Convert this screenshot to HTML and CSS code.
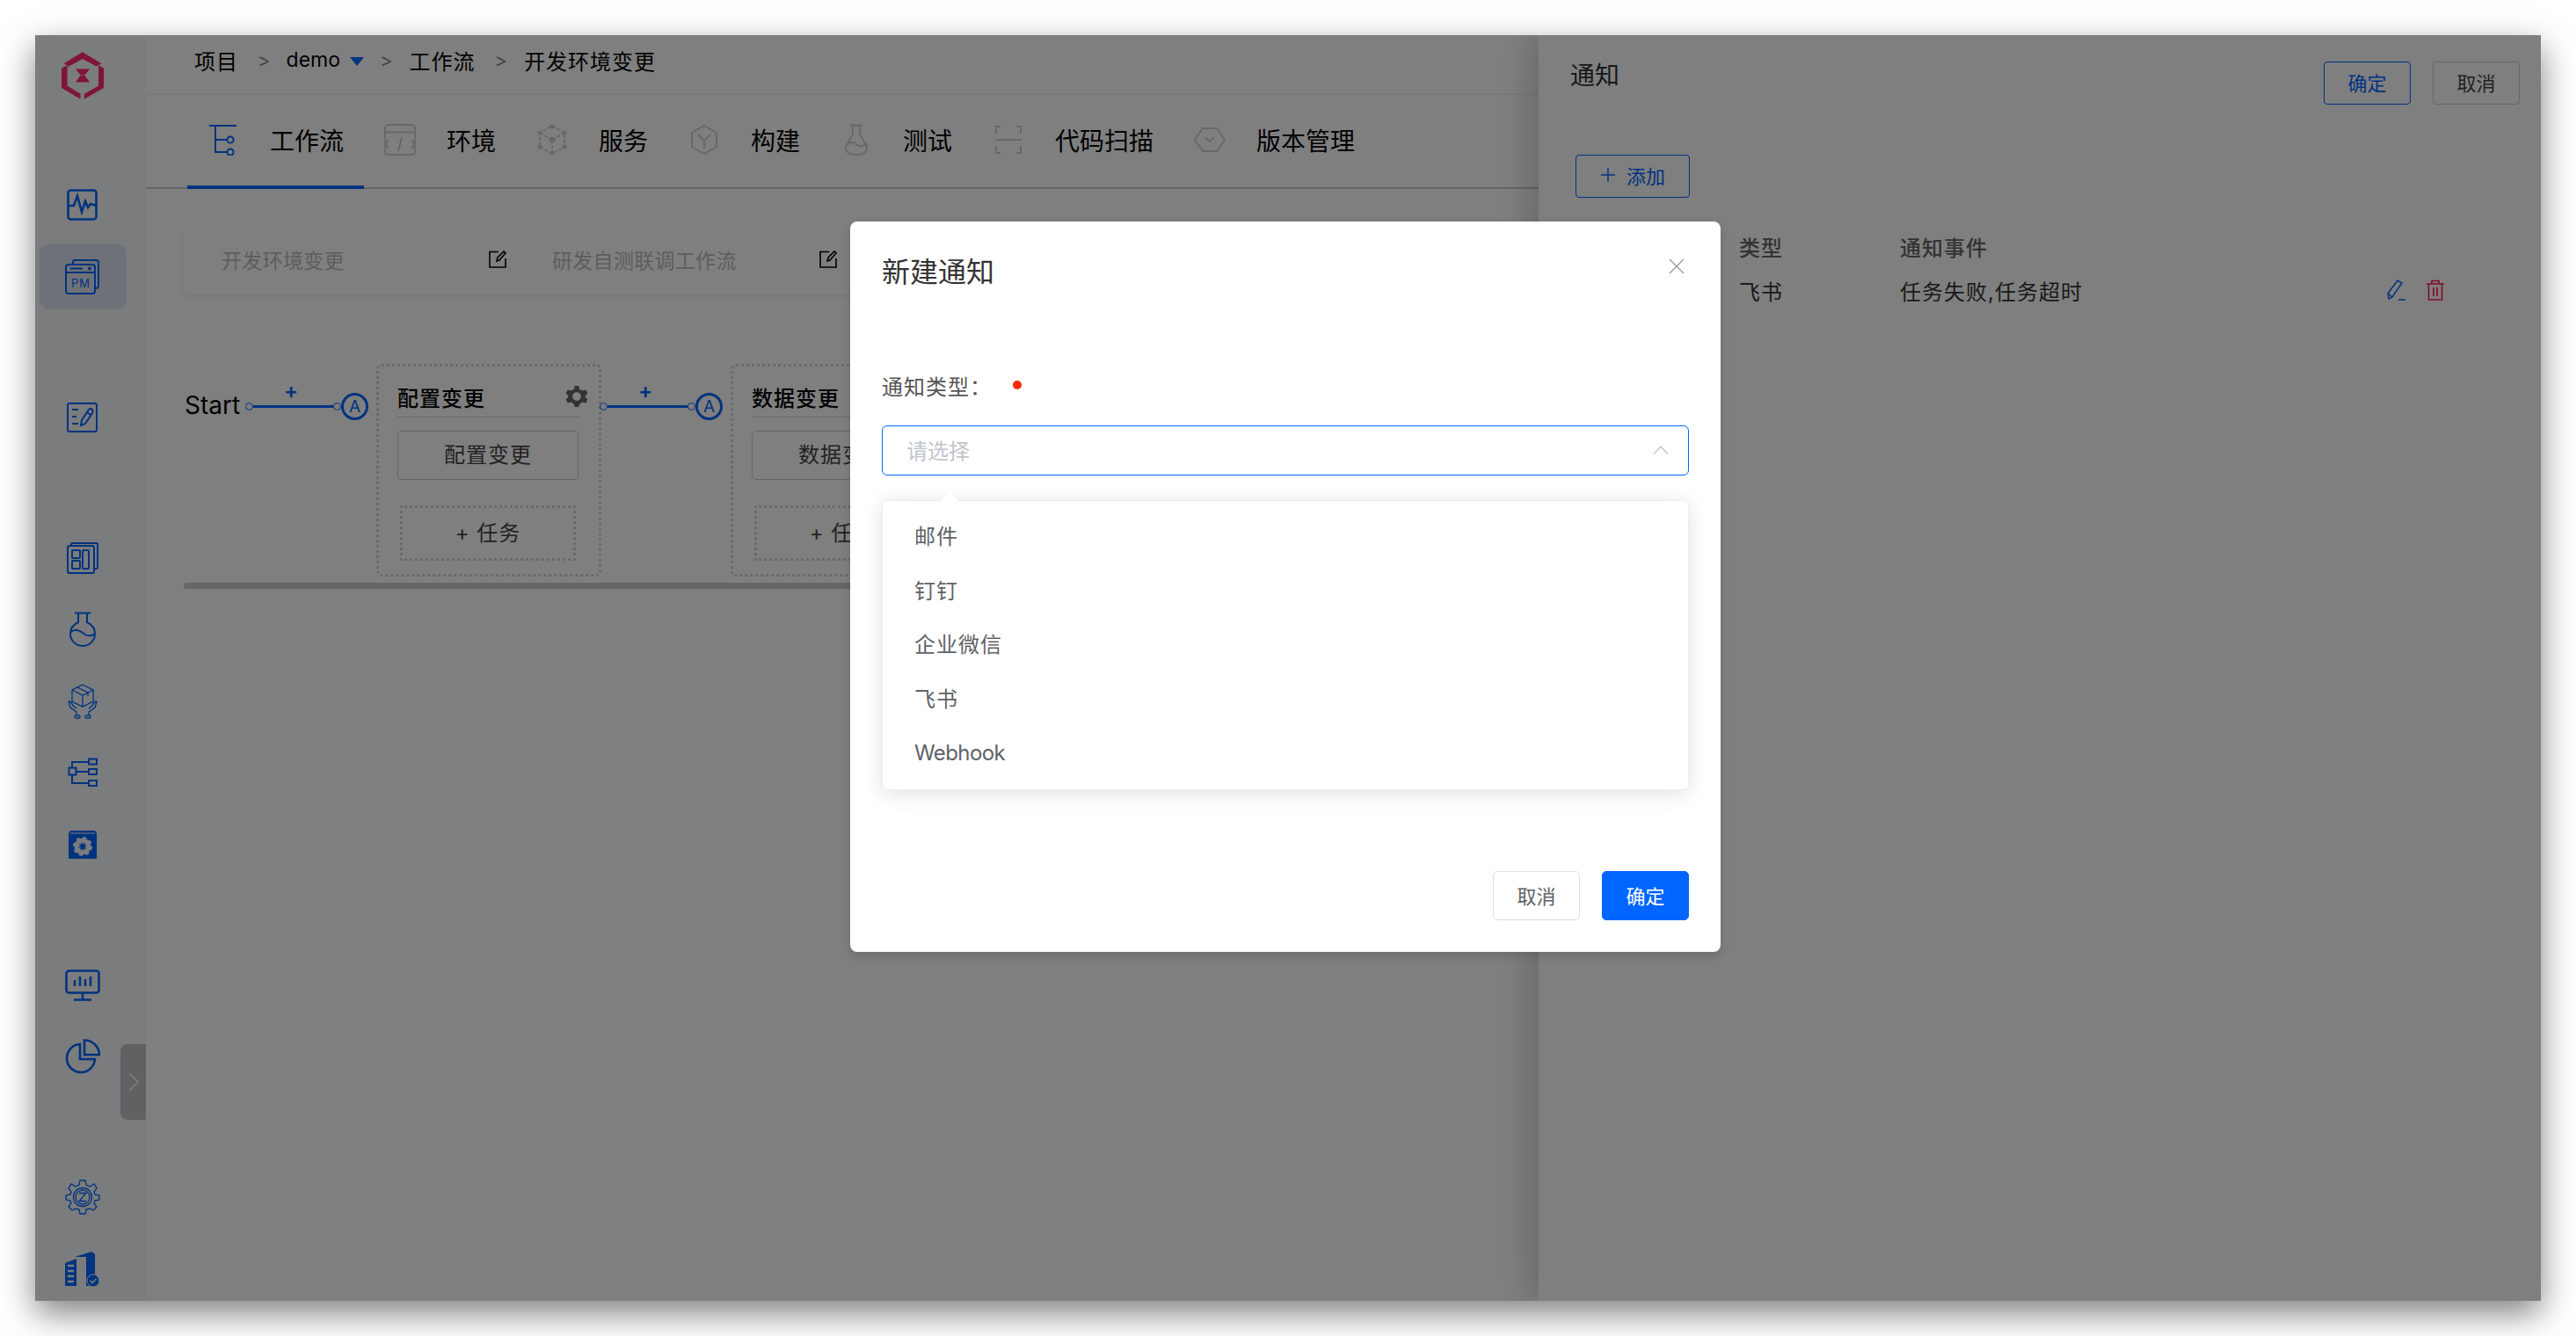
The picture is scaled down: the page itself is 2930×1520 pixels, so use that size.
FILE: index.html
```html
<!DOCTYPE html>
<html lang="zh-CN">
<head>
  <meta charset="UTF-8">
  <title>新建通知</title>
  <link rel="stylesheet" href="styles.css">
</head>
<body>

  <div class="window">

    <aside class="sidebar">
      <svg class="logo" viewBox="60 27 145 161" width="48" height="54">
        <path d="M132 27 L197 66 L180 76 L132 50 L85 76 L68 66 Z M60 82 L80 72 V143 L125 170 V188 L60 150 Z M205 82 L187 72 V143 L138 170 V188 L205 150 Z" fill="#ff2a70"/>
        <path d="M108 85 H157 L140 105 H125 Z M125 107 H140 L157 130 H108 Z" fill="#ff2a70"/>
      </svg>

      <div class="side-group">
        <div class="side-item">
          <svg viewBox="0 0 36 36" width="36" height="36" class="side-icon"><rect x="1.5" y="1.5" width="32" height="33" rx="3"/><path d="M2 19 L8 19 L12 8 L17 26 L21 14 L24 21 L27 17 L34 19"/></svg>
        </div>
        <div class="side-item active">
          <svg viewBox="0 0 40 40" width="40" height="40" class="side-icon thin"><path d="M9 5 V3 Q9 1 11 1 H35 Q38 1 38 4 V30 Q38 33 35 33"/><rect x="1" y="6" width="33" height="33" rx="3"/><path d="M1 15 H34"/><path d="M6 10.5 H20"/><circle cx="28" cy="10.5" r="1"/><text x="7" y="32" class="pm-text">PM</text></svg>
        </div>
      </div>

      <div class="side-group">
        <div class="side-item">
          <svg viewBox="0 0 36 36" width="36" height="36" class="side-icon thin"><rect x="1" y="2" width="33" height="32" rx="2"/><path d="M6 9 H13 M6 17 H11 M6 25 H13"/><path d="M16 27 L17 21 L25 9 Q27 7 29 9 Q30 11 29 13 L21 25 Z M23 12 L27 15"/></svg>
        </div>
      </div>

      <div class="side-group">
        <div class="side-item">
          <svg viewBox="0 0 36 36" width="36" height="36" class="side-icon thin"><path d="M5 4 V2 Q5 1 6 1 H34 Q35 1 35 2 V28 Q35 30 33 30 H31"/><rect x="1" y="4" width="30" height="31" rx="2"/><rect x="6" y="9" width="9" height="9" rx="1"/><rect x="6" y="21" width="9" height="9" rx="1"/><rect x="18" y="9" width="7" height="21" rx="1"/></svg>
        </div>
        <div class="side-item">
          <svg viewBox="0 0 30 40" width="30" height="40" class="side-icon thin"><path d="M6 1.5 H24"/><path d="M10 2 V12 Q1 16 1 25 A14 14 0 0 0 29 25 Q29 16 20 12 V2"/><path d="M1.5 23 Q8 18 15 24 Q22 30 28.5 25"/></svg>
        </div>
        <div class="side-item">
          <svg viewBox="0 0 34 40" width="34" height="40" class="side-icon hair"><path d="M17 1 L29 7 V20 L17 26 L5 20 V7 Z M5 7 L17 13 L29 7 M17 13 V26 M11 4 L23 10 V14"/><path d="M1 20 L3 27 L10 32 V35 M33 20 L31 27 L24 32 V35"/><path d="M1 20 Q4 20 6 25 L10 28 M33 20 Q30 20 28 25 L24 28"/><rect x="8" y="36" width="6" height="3" rx="1.5"/><rect x="20" y="36" width="6" height="3" rx="1.5"/></svg>
        </div>
        <div class="side-item">
          <svg viewBox="0 0 34 34" width="34" height="34" class="side-icon thin"><rect x="1.5" y="11.5" width="8" height="8"/><rect x="24" y="1.5" width="9" height="6"/><rect x="24" y="13" width="9" height="6"/><rect x="24" y="26" width="9" height="6"/><path d="M5 11 V5 H24 M9 16 H24 M5 20 V29 H24"/></svg>
        </div>
        <div class="side-item">
          <svg viewBox="0 0 34 34" width="34" height="34"><path d="M3 1 H31 L33 4 V33 H1 V4 Z" fill="#0066ff"/><path d="M3 4 H31" stroke="#f6f8fa" stroke-width="1"/><circle cx="17" cy="19" r="7" fill="none" stroke="#f6f8fa" stroke-width="8" stroke-dasharray="2.8 2.7"/><circle cx="17" cy="19" r="7" fill="none" stroke="#f6f8fa" stroke-width="5"/></svg>
        </div>
      </div>

      <div class="side-group">
        <div class="side-item">
          <svg viewBox="0 0 40 36" width="40" height="36" class="side-icon"><rect x="1.5" y="1.5" width="37" height="25" rx="3"/><path d="M20 27 V34 M10 34.5 H30"/><path d="M11 19 V12 M17 19 V8 M23 19 V11 M29 19 V8"/></svg>
        </div>
        <div class="side-item">
          <svg viewBox="0 0 40 40" width="40" height="40" class="side-icon"><path d="M17 6 A16 16 0 1 0 34 23 H17 Z"/><path d="M22 1.5 A17 17 0 0 1 39 18 H22 Z"/></svg>
        </div>
      </div>

      <div class="side-group">
        <div class="side-item">
          <svg viewBox="0 0 40 40" width="40" height="40" class="side-icon hair"><path d="M17 1 H23 L24 6 L28 8 L33 5 L36 10 L33 14 L34 17 L39 18 V23 L34 24 L33 27 L36 31 L32 35 L28 33 L24 34 L23 39 H17 L16 34 L12 33 L8 35 L4 31 L7 27 L6 24 L1 23 V18 L6 17 L7 14 L4 10 L7 5 L12 8 L16 6 Z"/><circle cx="20" cy="20" r="10.5"/><circle cx="20" cy="20" r="8"/><path d="M16 15.5 H24 L16 24.5 H24"/></svg>
        </div>
        <div class="side-item">
          <svg viewBox="0 0 40 40" width="40" height="40"><path d="M0 39 V13 L13 8 V39 Z M11 6 L30 0 L34 3 V39 H24 V6 Z" fill="#0066ff"/><path d="M3 16 H10 M3 22 H10 M3 28 H10 M3 34 H10" stroke="#f6f8fa" stroke-width="2.5"/><circle cx="32" cy="33" r="7" fill="#0066ff" stroke="#f6f8fa" stroke-width="1"/><path d="M28.5 33 L31 35.5 L35.5 31" fill="none" stroke="#f6f8fa" stroke-width="1.6"/></svg>
        </div>
      </div>

      <div class="side-toggle">
        <svg viewBox="0 0 12 22" width="12" height="22"><path d="M1 1 L11 11 L1 21" fill="none" stroke="#fff" stroke-width="1.4"/></svg>
      </div>
    </aside>

    <main class="content">
      <div class="breadcrumb">
        <span>项目</span>
        <span class="crumb-sep">&gt;</span>
        <span class="crumb-demo">demo</span>
        <span class="crumb-caret"></span>
        <span class="crumb-sep">&gt;</span>
        <span>工作流</span>
        <span class="crumb-sep">&gt;</span>
        <span>开发环境变更</span>
      </div>

      <nav class="tabs">
        <div class="tab active">
          <svg viewBox="0 0 36 36" width="36" height="36" class="tab-icon blue"><path d="M2 2 H33 M9 2 V32 H22 M9 18 H22"/><circle cx="26" cy="18" r="3.6"/><circle cx="26" cy="32" r="3.6"/></svg>
          <span>工作流</span>
        </div>
        <div class="tab">
          <svg viewBox="0 0 36 36" width="36" height="36" class="tab-icon"><rect x="1" y="1" width="34" height="34" rx="4"/><path d="M1 9.5 H35 M5 18 L2 23 L5 28 M31 18 L34 23 L31 28 M20 15 L16 31"/><path d="M24 5 h1 M28 5 h1 M32 5 h1"/></svg>
          <span>环境</span>
        </div>
        <div class="tab">
          <svg viewBox="0 0 36 36" width="36" height="36" class="tab-icon"><path d="M18 2 L32 10 V26 L18 34 L4 26 V10 Z M18 18 L18 34 M18 18 L4 10 M18 18 L32 10" stroke-dasharray="4 2"/><circle cx="18" cy="18" r="3.5" class="tab-dot"/><circle cx="18" cy="3" r="2.5" class="tab-dot"/><circle cx="32" cy="10" r="2.5" class="tab-dot"/><circle cx="32" cy="26" r="2.5" class="tab-dot"/><circle cx="18" cy="33" r="2.5" class="tab-dot"/><circle cx="4" cy="26" r="2.5" class="tab-dot"/><circle cx="4" cy="10" r="2.5" class="tab-dot"/></svg>
          <span>服务</span>
        </div>
        <div class="tab">
          <svg viewBox="0 0 36 36" width="36" height="36" class="tab-icon"><path d="M18 2 L32 10 V26 L18 34 L4 26 V10 Z M11 12 L18 19 L25 12 M18 19 V28"/></svg>
          <span>构建</span>
        </div>
        <div class="tab">
          <svg viewBox="0 0 36 36" width="36" height="36" class="tab-icon"><path d="M11 1.5 H25 M14 2 V12 L6 25 Q5 35 18 35 Q31 35 30 25 L22 12 V2"/><path d="M6 25 Q12 18 18 23 Q24 28 30 22"/></svg>
          <span>测试</span>
        </div>
        <div class="tab">
          <svg viewBox="0 0 36 36" width="36" height="36" class="tab-icon"><path d="M9 3 H4 V11 M27 3 H32 V11 M9 33 H4 V25 M27 33 H32 V25 M3 18 H33"/></svg>
          <span>代码扫描</span>
        </div>
        <div class="tab">
          <svg viewBox="0 0 36 36" width="36" height="36" class="tab-icon"><path d="M10 5 H26 L35 18 L26 31 H10 L1 18 Z M13 15 L18 20 L23 15"/></svg>
          <span>版本管理</span>
        </div>
      </nav>

      <div class="flow-tabs">
        <div class="flow-tab">
          <span>开发环境变更</span>
          <svg viewBox="0 0 20 20" width="20" height="20" class="edit-icon"><path d="M11 1.5 H1 V19 H19 V9"/><path d="M9 12 L10 8 L17 1 L19 3 L12 11 Z"/></svg>
        </div>
        <div class="flow-tab">
          <span>研发自测联调工作流</span>
          <svg viewBox="0 0 20 20" width="20" height="20" class="edit-icon"><path d="M11 1.5 H1 V19 H19 V9"/><path d="M9 12 L10 8 L17 1 L19 3 L12 11 Z"/></svg>
        </div>
      </div>

      <div class="pipeline">
        <div class="start">Start</div>

        <div class="connector">
          <i class="dot"></i><i class="line"></i><i class="dot"></i><b class="auto">A</b>
          <span class="conn-plus">+</span>
        </div>

        <section class="stage">
          <header class="stage-head">
            <span>配置变更</span>
            <svg viewBox="0 0 24 24" width="26" height="26"><path fill="#666" fill-rule="evenodd" d="M10 1 H14 L15 4.5 L18 6 L21.5 5 L23.5 9 L21 11 V13 L23.5 15 L21.5 19 L18 18 L15 20 L14 23 H10 L9 20 L6 18 L2.5 19 L.5 15 L3 13 V11 L.5 9 L2.5 5 L6 6 L9 4.5 Z M12 7.5 A4.5 4.5 0 1 0 12 16.5 A4.5 4.5 0 1 0 12 7.5 Z"/></svg>
          </header>
          <div class="job">配置变更</div>
          <div class="add-job">+ 任务</div>
        </section>

        <div class="connector">
          <i class="dot"></i><i class="line"></i><i class="dot"></i><b class="auto">A</b>
          <span class="conn-plus">+</span>
        </div>

        <section class="stage">
          <header class="stage-head">
            <span>数据变更</span>
          </header>
          <div class="job">数据变更</div>
          <div class="add-job">+ 任务</div>
        </section>
      </div>
      <div class="flow-scroll"></div>
    </main>

    <aside class="drawer">
      <div class="drawer-head">
        <span class="drawer-title">通知</span>
        <div class="drawer-actions">
          <button class="btn btn-line">确定</button>
          <button class="btn">取消</button>
        </div>
      </div>
      <button class="btn btn-line btn-add">
        <svg viewBox="0 0 18 18" width="18" height="18"><path d="M9 1 V17 M1 9 H17" stroke="#0066ff" stroke-width="1.4"/></svg>
        添加
      </button>
      <div class="notify-table">
        <div class="notify-row notify-th">
          <span class="col-type">类型</span>
          <span>通知事件</span>
        </div>
        <div class="notify-row">
          <span class="col-type">飞书</span>
          <span class="col-event">任务失败,任务超时</span>
          <svg viewBox="0 0 22 24" width="22" height="24" class="row-icon"><path d="M2 22 L1 16 L12 1 L17 4 L6 20 Z M1 16 L6 20 M13 23 H21" fill="none" stroke="#0066ff" stroke-width="1.5"/></svg>
          <svg viewBox="0 0 22 24" width="22" height="24" class="row-icon"><path d="M1 5 H21 M7 5 V1.5 H15 V5 M3.5 5 V23 H18.5 V5 M9 9 V19 M13 9 V19" fill="none" stroke="#ff1a4b" stroke-width="1.6"/></svg>
        </div>
      </div>
    </aside>

    <div class="mask"></div>
  </div>

  <div class="modal">
    <div class="modal-head">
      <span class="modal-title">新建通知</span>
      <svg viewBox="0 0 18 18" width="18" height="18"><path d="M1 1 L17 17 M17 1 L1 17" stroke="#999" stroke-width="1.4"/></svg>
    </div>

    <div class="form-label">
      <span>通知类型：</span>
      <i class="required"></i>
    </div>

    <div class="select">
      <span class="placeholder">请选择</span>
      <svg viewBox="0 0 18 10" width="18" height="10"><path d="M1 9.5 L9 1 L17 9.5" fill="none" stroke="#c0c4cc" stroke-width="1.3"/></svg>
    </div>

    <div class="dropdown">
      <div class="option">邮件</div>
      <div class="option">钉钉</div>
      <div class="option">企业微信</div>
      <div class="option">飞书</div>
      <div class="option option-latin">Webhook</div>
    </div>

    <div class="modal-foot">
      <button class="btn btn-plain">取消</button>
      <button class="btn btn-primary">确定</button>
    </div>
  </div>

</body>
</html>
```

FILE: styles.css
```css
* {
  box-sizing: border-box;
}
html, body {
  height: 100%;
}
body {
  margin: 0;
  padding: 40px;
  background: #fff;
  font-family: "Inter", "Noto Sans CJK SC", sans-serif;
  overflow: hidden;
}
.window {
  position: relative;
  display: flex;
  height: 1440px;
  background: #fff;
  overflow: hidden;
}
body::before {
  content: "";
  position: absolute;
  left: 40px;
  top: 40px;
  width: 2850px;
  height: 1440px;
  box-shadow: 0 14px 36px rgba(0, 0, 0, 0.5);
}

/* sidebar */
.sidebar {
  position: relative;
  flex: 0 0 126px;
  display: flex;
  flex-direction: column;
  align-items: center;
  padding: 19px 18px 0 0;
  background: #f6f8fa;
}
.logo {
  margin-bottom: 82.5px;
  flex: none;
}
.side-group {
  display: flex;
  flex-direction: column;
  gap: 6.5px;
  margin-bottom: 85px;
}
.side-item {
  display: flex;
  align-items: center;
  justify-content: center;
  width: 99px;
  height: 75px;
  border-radius: 12px;
}
.side-item.active {
  background: #dde4f0;
}
.side-icon {
  fill: none;
  stroke: #0066ff;
  stroke-width: 2.6;
}
.side-icon.thin {
  stroke-width: 2;
}
.side-icon.hair {
  stroke-width: 1.3;
}
.pm-text {
  font-size: 13px;
  fill: #0066ff;
  stroke: none;
  letter-spacing: 1px;
}
.side-toggle {
  position: absolute;
  right: 0;
  top: 1148px;
  width: 29px;
  height: 86px;
  display: flex;
  align-items: center;
  justify-content: center;
  border-radius: 8px 0 0 8px;
  background: #bfc3c6;
}

/* main column */
.content {
  flex: 1;
  min-width: 0;
  color: #000;
  overflow: hidden;
}
.breadcrumb {
  display: flex;
  align-items: center;
  height: 67px;
  padding: 0 0 11px 55px;
  font-size: 24px;
  letter-spacing: 1px;
  color: #000;
}
.crumb-sep {
  margin: 0 18px 0 22px;
  color: #888;
  font-size: 22px;
}
.crumb-demo {
  margin-left: -1px;
  font-size: 23px;
  letter-spacing: 0;
}
.crumb-caret {
  width: 16px;
  height: 10px;
  margin: 4px -4px 0 11px;
  border-left: 8px solid transparent;
  border-right: 8px solid transparent;
  border-top: 10px solid #0066ff;
}
.tabs {
  display: flex;
  height: 108px;
  padding-left: 47px;
  border-top: 1px solid #ebebeb;
  border-bottom: 2px solid #ccc;
}
.tab {
  display: flex;
  align-items: center;
  gap: 35px;
  height: 107px;
  padding: 0 23px 6px;
  font-size: 28px;
  color: #000;
}
.tab.active {
  padding-bottom: 2px;
  border-bottom: 4px solid #0066ff;
}
.tab-icon {
  fill: none;
  stroke: #d0d0d0;
  stroke-width: 2;
  flex: none;
}
.tab-icon.blue {
  stroke: #0066ff;
}
.tab-dot {
  fill: #d0d0d0;
  stroke: none;
}
.flow-tabs {
  display: flex;
  width: 900px;
  height: 76px;
  margin: 44px 0 0 43px;
  padding: 0 0 4px 43px;
  box-shadow: 0 3px 8px rgba(0, 0, 0, 0.06);
}
.flow-tab {
  display: flex;
  align-items: center;
  flex: 0 0 376px;
  justify-content: space-between;
  padding-right: 52px;
  font-size: 23px;
  letter-spacing: 0.3px;
  color: #bbb;
}
.edit-icon {
  fill: none;
  stroke: #000;
  stroke-width: 1.6;
}

/* pipeline */
.pipeline {
  display: flex;
  align-items: flex-start;
  margin: 79px 0 0 44px;
  width: 1600px;
}
.start {
  flex: 0 0 71px;
  margin-top: 29px;
  font-size: 28px;
  line-height: 36px;
}
.connector {
  position: relative;
  flex: 0 0 149px;
  display: flex;
  align-items: center;
  height: 30px;
  margin: 33px 0 0 -2px;
}
.dot {
  flex: none;
  width: 9px;
  height: 9px;
  border: 1.5px solid #0066ff;
  border-radius: 50%;
}
.line {
  width: 91px;
  height: 3px;
  background: #0066ff;
}
.auto {
  display: flex;
  align-items: center;
  justify-content: center;
  width: 31px;
  height: 31px;
  border: 3px solid #0066ff;
  border-radius: 50%;
  font-size: 19px;
  font-weight: 400;
  color: #0066ff;
}
.conn-plus {
  position: absolute;
  left: 44px;
  top: -14px;
  font-size: 24px;
  line-height: 24px;
  font-weight: 600;
  color: #0066ff;
}
.stage {
  flex: 0 0 256px;
  height: 242px;
  padding: 19px 23px 0 21px;
  border: 3px dotted #d4d4d4;
  border-radius: 6px;
}
.stage-head {
  display: flex;
  align-items: center;
  justify-content: space-between;
  height: 39px;
  border-bottom: 1px solid #ccc;
  padding: 0 0 8px;
  margin-right: -1px;
  font-size: 24px;
  letter-spacing: 1px;
  font-weight: 500;
}
.stage-head svg {
  margin-right: -10px;
}
.job {
  height: 56px;
  margin-top: 15px;
  border: 1px solid #ccc;
  border-radius: 5px;
  line-height: 54px;
  text-align: center;
  font-size: 24px;
  letter-spacing: 1px;
  color: #444;
}
.add-job {
  height: 63px;
  margin: 29px 3px 0 3px;
  border: 3px dotted #d4d4d4;
  border-radius: 3px;
  line-height: 57px;
  text-align: center;
  font-size: 24px;
  letter-spacing: 1px;
  color: #444;
}
.flow-scroll {
  width: 900px;
  height: 7px;
  margin: 7px 0 0 43px;
  border-radius: 4px;
  background: #ccc;
}

/* drawer */
.drawer {
  position: absolute;
  left: 1710px;
  top: 0;
  right: 0;
  bottom: 0;
  padding: 30px 24px 0 36px;
  background: #fff;
  box-shadow: -6px 0 40px rgba(0, 0, 0, 0.22);
}
.drawer-head {
  display: flex;
  justify-content: space-between;
  align-items: flex-start;
}
.drawer-title {
  font-size: 28px;
  line-height: 32px;
  color: #333;
}
.drawer-actions {
  display: flex;
  gap: 25px;
}
.btn {
  width: 99px;
  height: 49px;
  padding: 0 0 3px;
  border: 1px solid #c8ccd4;
  border-radius: 4px;
  background: #fff;
  font-family: inherit;
  font-size: 22px;
  color: #444;
}
.btn-line {
  border-color: #0066ff;
  color: #0066ff;
}
.btn-add {
  display: flex;
  align-items: center;
  justify-content: center;
  gap: 12px;
  width: 130px;
  margin: 57px 0 0 6px;
}
.notify-table {
  margin-top: 30px;
  padding-left: 192px;
  font-size: 24px;
  letter-spacing: 1px;
}
.notify-row {
  display: flex;
  align-items: center;
  height: 50px;
  color: #333;
}
.notify-th {
  color: #666;
  font-weight: 500;
}
.col-type {
  flex: 0 0 183px;
}
.col-event {
  flex: 0 0 554px;
}
.row-icon {
  margin-right: 22px;
}

.mask {
  position: absolute;
  inset: 0;
  background: rgba(0, 0, 0, 0.5);
}

/* modal */
.modal {
  position: absolute;
  left: 967px;
  top: 252px;
  width: 990px;
  height: 831px;
  padding: 0 36px;
  border-radius: 8px;
  background: #fff;
  box-shadow: 0 4px 12px rgba(0, 0, 0, 0.15);
}
.modal-head {
  display: flex;
  align-items: flex-start;
  justify-content: space-between;
  padding-top: 38px;
}
.modal-title {
  font-size: 32px;
  line-height: 40px;
  color: #333;
}
.modal-head svg {
  margin: 4px 5px 0 0;
}
.form-label {
  display: flex;
  align-items: center;
  margin-top: 93px;
  height: 30px;
  font-size: 24px;
  letter-spacing: 1px;
  color: #555;
}
.required {
  width: 10px;
  height: 10px;
  margin-left: 24px;
  border-radius: 50%;
  background: #f52a00;
}
.select {
  display: flex;
  align-items: center;
  justify-content: space-between;
  height: 57px;
  margin-top: 31px;
  padding: 0 22px 2px 27px;
  border: 1px solid #0066ff;
  border-radius: 6px;
}
.placeholder {
  font-size: 24px;
  color: #c0c4cc;
}
.dropdown {
  position: absolute;
  left: 36px;
  right: 36px;
  top: 317px;
  height: 330px;
  padding: 10px 0;
  border: 1px solid #ebeef5;
  border-radius: 6px;
  background: #fff;
  box-shadow: 0 4px 24px rgba(0, 0, 0, 0.12);
}
.dropdown::before {
  content: "";
  position: absolute;
  left: 66px;
  top: -11px;
  border-left: 10px solid transparent;
  border-right: 10px solid transparent;
  border-bottom: 11px solid #fff;
}
.option {
  height: 61.5px;
  padding-left: 36px;
  line-height: 61.5px;
  font-size: 24px;
  letter-spacing: 1px;
  color: #606266;
}
.option-latin {
  letter-spacing: -0.6px;
}
.modal-foot {
  position: absolute;
  right: 36px;
  bottom: 36px;
  display: flex;
  gap: 25px;
}
.modal-foot .btn {
  height: 56px;
  border-radius: 5px;
}
.btn-plain {
  border-color: #dcdfe6;
  color: #606266;
}
.btn-primary {
  border-color: #0066ff;
  background: #0066ff;
  color: #fff;
}
```
